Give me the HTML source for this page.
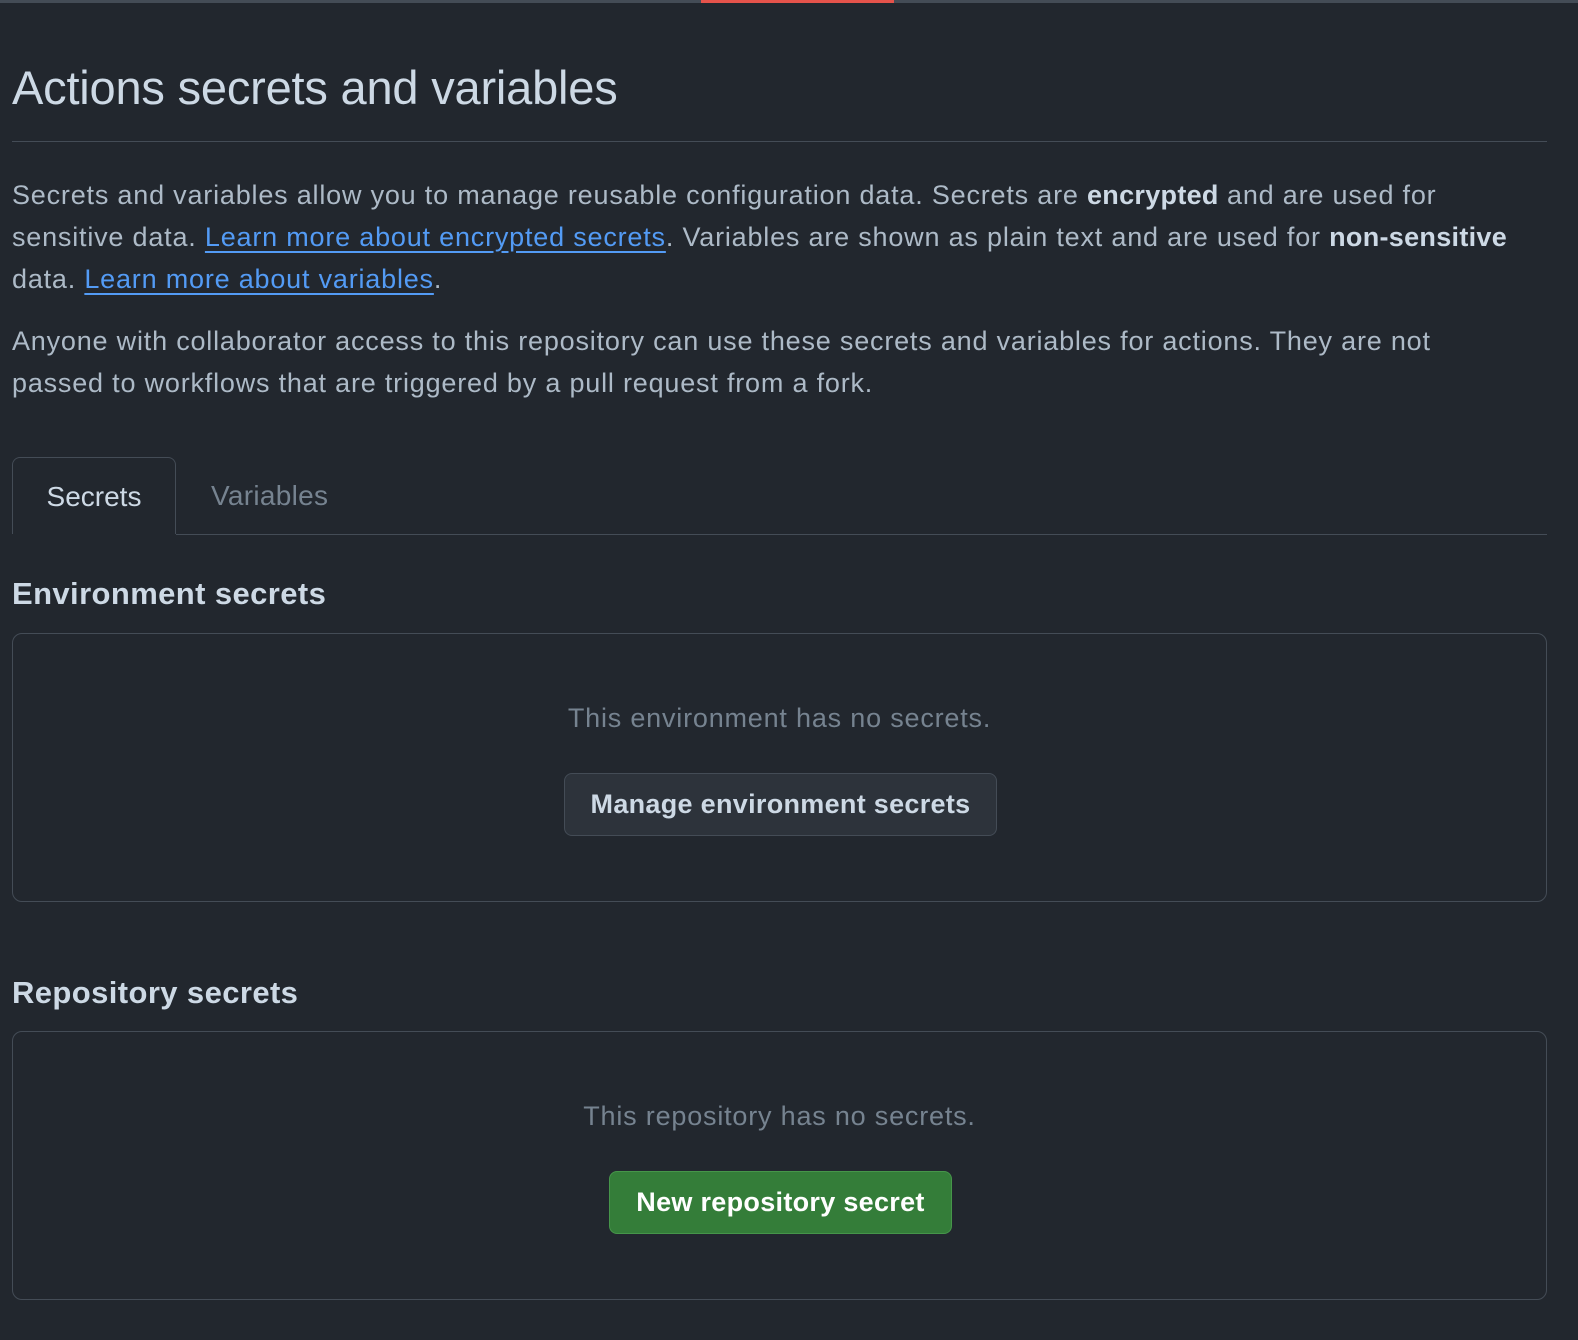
<!DOCTYPE html>
<html><head><meta charset="utf-8"><style>
html,body{margin:0;padding:0;background:#22272e;width:1578px;height:1340px;overflow:hidden;font-family:"Liberation Sans",sans-serif;color:#adbac7}
.topline{position:absolute;left:0;top:0;width:1578px;height:3px;background:#444c56}
.red{position:absolute;left:701px;top:0;width:193px;height:3px;background:#e5534b}
h1{position:absolute;left:12px;top:60px;margin:0;font-weight:400;font-size:47px;color:#cdd9e5;letter-spacing:-0.2px}
.hr{position:absolute;left:12px;top:141px;width:1535px;height:1px;background:#444c56}
.p{position:absolute;left:12px;font-size:27px;letter-spacing:0.8px;line-height:42px;color:#adbac7;white-space:nowrap}
.p b{color:#cdd9e5;letter-spacing:0.3px}
.p a{color:#539bf5;text-decoration:underline;text-underline-offset:5px}
.tab{position:absolute;top:457px;left:12px;width:164px;height:77px;border:1px solid #444c56;border-bottom:none;border-radius:8px 8px 0 0;background:#22272e;box-sizing:border-box;font-size:28px;color:#cdd9e5;text-align:center;line-height:78px}
.tabline{position:absolute;left:176px;top:534px;width:1371px;height:1px;background:#444c56}
.tab2{position:absolute;left:211px;top:457px;line-height:78px;font-size:28px;color:#768390;letter-spacing:0.3px}
h2{position:absolute;left:12px;margin:0;font-size:31px;letter-spacing:0.4px;font-weight:700;color:#cdd9e5}
.box{position:absolute;left:12px;width:1535px;border:1px solid #444c56;border-radius:10px;box-sizing:border-box}
.muted{position:absolute;left:0;width:100%;text-align:center;font-size:27px;letter-spacing:0.8px;color:#768390}
.btn{position:absolute;box-sizing:border-box;border-radius:8px;font-size:27px;letter-spacing:0.3px;font-weight:700;text-align:center}
</style></head><body>
<div class="topline"></div><div class="red"></div>
<h1>Actions secrets and variables</h1>
<div class="hr"></div>
<div class="p" style="top:174px">Secrets and variables allow you to manage reusable configuration data. Secrets are <b>encrypted</b> and are used for<br>sensitive data. <a>Learn more about encrypted secrets</a>. Variables are shown as plain text and are used for <b>non-sensitive</b><br>data. <a>Learn more about variables</a>.</div>
<div class="p" style="top:320px">Anyone with collaborator access to this repository can use these secrets and variables for actions. They are not<br>passed to workflows that are triggered by a pull request from a fork.</div>
<div class="tabline"></div>
<div class="tab">Secrets</div>
<div class="tab2">Variables</div>
<h2 style="top:576px">Environment secrets</h2>
<div class="box" style="top:633px;height:269px">
  <div class="muted" style="top:69px">This environment has no secrets.</div>
  <div class="btn" style="left:551px;top:139px;width:433px;height:63px;border:1px solid #444c56;background:#2d333b;color:#cdd9e5;line-height:61px">Manage environment secrets</div>
</div>
<h2 style="top:975px">Repository secrets</h2>
<div class="box" style="top:1031px;height:269px">
  <div class="muted" style="top:69px">This repository has no secrets.</div>
  <div class="btn" style="left:596px;top:139px;width:343px;height:63px;border:1px solid #46954a;background:#347d39;color:#fff;line-height:61px">New repository secret</div>
</div>
</body></html>
